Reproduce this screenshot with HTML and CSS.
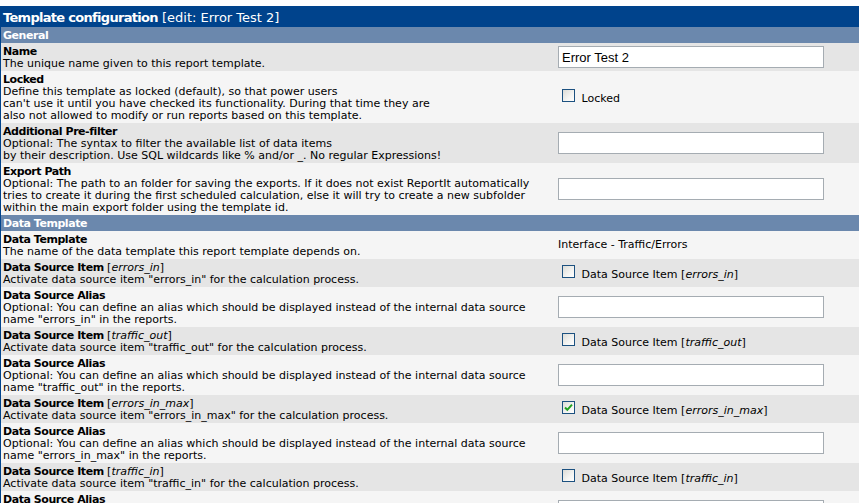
FILE: index.html
```html
<!DOCTYPE html>
<html>
<head>
<meta charset="utf-8">
<link rel="stylesheet" href="styles.css">
</head>
<body>
<div class="config">
  <div class="title"><span class="title-main">Template configuration</span> [edit: Error Test 2]</div>

  <div class="section">General</div>

  <div class="row dark">
    <div class="desc"><div class="label">Name</div>The unique name given to this report template.</div>
    <div class="field"><input class="text" type="text" value="Error Test 2"></div>
  </div>
  <div class="row light">
    <div class="desc"><div class="label">Locked</div>Define this template as locked (default), so that power users<br>can't use it until you have checked its functionality. During that time they are<br>also not allowed to modify or run reports based on this template.</div>
    <div class="field"><label class="opt"><span class="check"></span> Locked</label></div>
  </div>
  <div class="row dark">
    <div class="desc"><div class="label">Additional Pre-filter</div>Optional: The syntax to filter the available list of data items<br>by their description. Use SQL wildcards like % and/or _. No regular Expressions!</div>
    <div class="field"><input class="text" type="text" value=""></div>
  </div>
  <div class="row light">
    <div class="desc"><div class="label">Export Path</div>Optional: The path to an folder for saving the exports. If it does not exist ReportIt automatically tries to create it during the first scheduled calculation, else it will try to create a new subfolder within the main export folder using the template id.</div>
    <div class="field"><input class="text" type="text" value=""></div>
  </div>

  <div class="section">Data Template</div>

  <div class="row light">
    <div class="desc"><div class="label">Data Template</div>The name of the data template this report template depends on.</div>
    <div class="field"><span class="value">Interface - Traffic/Errors</span></div>
  </div>
  <div class="row dark">
    <div class="desc"><div class="label">Data Source Item <span class="ds">[<i>errors_in</i>]</span></div>Activate data source item "errors_in" for the calculation process.</div>
    <div class="field"><label class="opt"><span class="check"></span> Data Source Item [<i>errors_in</i>]</label></div>
  </div>
  <div class="row light">
    <div class="desc"><div class="label">Data Source Alias</div>Optional: You can define an alias which should be displayed instead of the internal data source name "errors_in" in the reports.</div>
    <div class="field"><input class="text" type="text" value=""></div>
  </div>
  <div class="row dark">
    <div class="desc"><div class="label">Data Source Item <span class="ds">[<i>traffic_out</i>]</span></div>Activate data source item "traffic_out" for the calculation process.</div>
    <div class="field"><label class="opt"><span class="check"></span> Data Source Item [<i>traffic_out</i>]</label></div>
  </div>
  <div class="row light">
    <div class="desc"><div class="label">Data Source Alias</div>Optional: You can define an alias which should be displayed instead of the internal data source name "traffic_out" in the reports.</div>
    <div class="field"><input class="text" type="text" value=""></div>
  </div>
  <div class="row dark">
    <div class="desc"><div class="label">Data Source Item <span class="ds">[<i>errors_in_max</i>]</span></div>Activate data source item "errors_in_max" for the calculation process.</div>
    <div class="field"><label class="opt"><span class="check"><svg width="11" height="11" viewBox="0 0 11 11"><path d="M2 5.5 L4.3 7.8 L9 2.6" fill="none" stroke="#21a121" stroke-width="2"/></svg></span> Data Source Item [<i>errors_in_max</i>]</label></div>
  </div>
  <div class="row light">
    <div class="desc"><div class="label">Data Source Alias</div>Optional: You can define an alias which should be displayed instead of the internal data source name "errors_in_max" in the reports.</div>
    <div class="field"><input class="text" type="text" value=""></div>
  </div>
  <div class="row dark">
    <div class="desc"><div class="label">Data Source Item <span class="ds">[<i>traffic_in</i>]</span></div>Activate data source item "traffic_in" for the calculation process.</div>
    <div class="field"><label class="opt"><span class="check"></span> Data Source Item [<i>traffic_in</i>]</label></div>
  </div>
  <div class="row light">
    <div class="desc"><div class="label">Data Source Alias</div>Optional: You can define an alias which should be displayed instead of the internal data source name "traffic_in" in the reports.</div>
    <div class="field"><input class="text" type="text" value=""></div>
  </div>
</div>
</body>
</html>
```

FILE: styles.css
```css
html {
  overflow: hidden;
  background: #ffffff;
}
body {
  margin: 6px 0 0 0;
  font-family: "DejaVu Sans", Verdana, sans-serif;
  font-size: 11px;
  line-height: 12px;
  color: #000000;
}
.config {
  width: 900px;
  border-left: 1px solid #00438c;
}
.title {
  background: #00438c;
  color: #ffffff;
  font-size: 13px;
  line-height: 17px;
  padding: 3px 2px 1px 2px;
  white-space: nowrap;
}
.title-main {
  font-weight: bold;
  letter-spacing: -0.7px;
}
.section {
  background: #6b88ad;
  color: #ffffff;
  font-weight: bold;
  letter-spacing: -0.45px;
  padding: 3px 2px 1px 2px;
}
.row {
  display: grid;
  grid-template-columns: 555px 1fr;
}
.row.dark {
  background: #e5e5e5;
}
.row.light {
  background: #f5f5f5;
}
.desc {
  padding: 3px 1px 1px 2px;
}
.label {
  font-weight: bold;
  letter-spacing: -0.45px;
}
.ds {
  font-weight: normal;
  letter-spacing: 0;
}
.field {
  display: flex;
  align-items: center;
  padding: 2px;
}
.opt,
.value {
  display: block;
  white-space: pre;
}
.text {
  box-sizing: border-box;
  width: 266px;
  height: 22px;
  margin: 0;
  border: 1px solid #a5acb2;
  padding: 0 3px;
  font-family: "Liberation Sans", Arial, sans-serif;
  font-size: 13px;
  color: #000000;
  background: #ffffff;
  outline: none;
}
.check {
  box-sizing: border-box;
  display: inline-block;
  vertical-align: baseline;
  width: 13px;
  height: 13px;
  margin: 0 3px 0 4px;
  border: 1px solid #1c5180;
  background: linear-gradient(135deg, #dcdcd7 0%, #f4f4f2 60%, #ffffff 100%);
}
.check svg {
  display: block;
}
```
